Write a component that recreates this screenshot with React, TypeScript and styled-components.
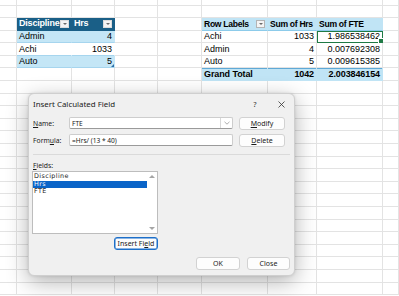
import React from "react";
import styled, { createGlobalStyle, css } from "styled-components";

const GlobalStyle = createGlobalStyle`
  html, body { margin: 0; padding: 0; background: #ffffff; }
  body { overflow: hidden; }
`;

type Tone = "grid" | "tableHead" | "band" | "tableRow" | "pivotHead" | "pivotRow" | "pivotTotal";

interface CellSpec {
	text?: string;
	tone?: Tone;
	align?: "left" | "right";
	filter?: boolean;
	selected?: boolean;
	handle?: boolean;
}

const COLUMNS = 9;
const ROWS = 24;

const cells: Record<string, CellSpec> = {
	"2-1": { text: "Discipline", tone: "tableHead", filter: true },
	"2-2": { text: "Hrs", tone: "tableHead", filter: true },
	"3-1": { text: "Admin", tone: "band" },
	"3-2": { text: "4", tone: "band", align: "right" },
	"4-1": { text: "Achi", tone: "tableRow" },
	"4-2": { text: "1033", tone: "tableRow", align: "right" },
	"5-1": { text: "Auto", tone: "band" },
	"5-2": { text: "5", tone: "band", align: "right", handle: true },

	"2-5": { text: "Row Labels", tone: "pivotHead", filter: true },
	"2-6": { text: "Sum of Hrs", tone: "pivotHead" },
	"2-7": { text: "Sum of FTE", tone: "pivotHead" },
	"3-5": { text: "Achi", tone: "pivotRow" },
	"3-6": { text: "1033", tone: "pivotRow", align: "right" },
	"3-7": { text: "1.986538462", tone: "pivotRow", align: "right", selected: true },
	"4-5": { text: "Admin", tone: "pivotRow" },
	"4-6": { text: "4", tone: "pivotRow", align: "right" },
	"4-7": { text: "0.007692308", tone: "pivotRow", align: "right" },
	"5-5": { text: "Auto", tone: "pivotRow" },
	"5-6": { text: "5", tone: "pivotRow", align: "right" },
	"5-7": { text: "0.009615385", tone: "pivotRow", align: "right" },
	"6-5": { text: "Grand Total", tone: "pivotTotal" },
	"6-6": { text: "1042", tone: "pivotTotal", align: "right" },
	"6-7": { text: "2.003846154", tone: "pivotTotal", align: "right" },
};

const toneStyles: Record<Tone, ReturnType<typeof css>> = {
	grid: css``,
	tableHead: css`
		background: #1a5f87;
		color: #ffffff;
		font-weight: bold;
		letter-spacing: -0.2px;
		border-right-color: #1a5f87;
		border-bottom-color: #1a5f87;
	`,
	band: css`
		background: #c4e6f6;
		border-right-color: #c4e6f6;
		border-bottom-color: #a6d5ee;
	`,
	tableRow: css`
		background: #ffffff;
		border-right-color: #ffffff;
		border-bottom-color: #a6d5ee;
	`,
	pivotHead: css`
		background: #c0e4f5;
		font-weight: bold;
		font-size: 8.6px;
		letter-spacing: -0.3px;
		border-right-color: #c0e4f5;
		border-bottom-color: #8ccbea;
	`,
	pivotRow: css``,
	pivotTotal: css`
		background: #c0e4f5;
		font-weight: bold;
		letter-spacing: -0.1px;
		border-right-color: #c0e4f5;
		border-bottom-color: #c0e4f5;
		box-shadow: inset 0 1px 0 #5fa9d6;
	`,
};

const Sheet = styled.div`
	position: relative;
	width: 399px;
	height: 296px;
	overflow: hidden;
	display: grid;
	grid-template-columns: 17px 55px 43px 43px 44px 66px 49px 66px 1fr;
	grid-template-rows: 5.5px repeat(23, 12.6px);
	font-family: "Liberation Sans", Arial, sans-serif;
	font-size: 9px;
	color: #000000;
	background: #ffffff;
`;

const Cell = styled.div<{ $tone: Tone; $align: "left" | "right"; $selected?: boolean }>`
	position: relative;
	box-sizing: border-box;
	display: flex;
	align-items: center;
	justify-content: ${(p) => (p.$align === "right" ? "flex-end" : "flex-start")};
	padding: 0 2px;
	white-space: nowrap;
	border-right: 1px solid #e3e3e3;
	border-bottom: 1px solid #e3e3e3;
	${(p) => toneStyles[p.$tone]}
	${(p) =>
		p.$selected &&
		css`
			outline: 1.5px solid #1f7a45;
			outline-offset: -1.5px;
			&::after {
				content: "";
				position: absolute;
				right: -2px;
				bottom: -2px;
				width: 4px;
				height: 4px;
				background: #1f7a45;
				border: 1px solid #ffffff;
			}
		`}
`;

const CellText = styled.span`
	line-height: 1;
`;

const FilterButton = styled.span<{ $dark?: boolean }>`
	margin-left: auto;
	flex: none;
	width: 9px;
	height: 8px;
	box-sizing: border-box;
	background: #f4f4f4;
	border: 1px solid ${(p) => (p.$dark ? "#dcdcdc" : "#b4b4b4")};
	display: flex;
	align-items: center;
	justify-content: center;
	&::after {
		content: "";
		border-left: 2px solid transparent;
		border-right: 2px solid transparent;
		border-top: 2.5px solid #6a6a6a;
	}
`;

const ResizeMark = styled.span`
	position: absolute;
	right: 0;
	bottom: 0;
	width: 0;
	height: 0;
	border-left: 3px solid transparent;
	border-bottom: 3px solid #2d6fa7;
`;

/* dialog */

const Dialog = styled.div`
	position: absolute;
	left: 28px;
	top: 93px;
	width: 267px;
	height: 183px;
	box-sizing: border-box;
	display: flex;
	flex-direction: column;
	background: #f0f0f0;
	border: 1px solid #cfcfcf;
	border-radius: 6px;
	box-shadow: 0 6px 22px rgba(0, 0, 0, 0.3), 0 0 3px rgba(0, 0, 0, 0.12);
	font-family: "Noto Sans", "Open Sans", sans-serif;
	font-size: 7px;
	color: #1a1a1a;
`;

const TitleBar = styled.div`
	height: 20px;
	display: flex;
	align-items: center;
	padding-left: 4px;
`;

const Title = styled.span`
	font-size: 7.9px;
	flex: 1;
`;

const CaptionButton = styled.span`
	width: 26px;
	height: 20px;
	display: flex;
	align-items: center;
	justify-content: center;
	color: #333333;
	font-size: 7.5px;
`;

const FormGrid = styled.div`
	margin-top: 2px;
	padding-left: 4px;
	display: grid;
	grid-template-columns: 30px 164px 46px;
	column-gap: 6px;
	row-gap: 3px;
	grid-template-rows: 14px 14px;
	align-items: center;
`;

const Label = styled.span`
	font-size: 6.8px;
	white-space: nowrap;
`;

const TextBox = styled.div`
	height: 12px;
	box-sizing: border-box;
	background: #ffffff;
	border: 1px solid #cdcdcd;
	border-bottom-color: #9a9a9a;
	border-radius: 2px;
	display: flex;
	align-items: center;
	padding-left: 2px;
	font-size: 6.6px;
	white-space: nowrap;
`;

const ComboArrow = styled.span`
	margin-left: auto;
	width: 11px;
	height: 10px;
	display: flex;
	align-items: center;
	justify-content: center;
	border-left: 1px solid #d8d8d8;
`;

const DlgButton = styled.button<{ $focused?: boolean; $width?: number }>`
	width: ${(p) => p.$width ?? 46}px;
	height: 13px;
	padding: 0;
	box-sizing: border-box;
	background: #fdfdfd;
	border: 1px solid ${(p) => (p.$focused ? "#1d6fc9" : "#d2d2d2")};
	box-shadow: ${(p) => (p.$focused ? "inset 0 0 0 0.5px #1d6fc9" : "none")};
	border-radius: 3px;
	font-family: "Noto Sans", "Open Sans", sans-serif;
	font-size: 7px;
	color: #1a1a1a;
	line-height: 1;
`;

const Separator = styled.div`
	margin: 7px 4px 0 4px;
	height: 1px;
	background: #dadada;
`;

const FieldsLabel = styled.span`
	margin: 6px 0 0 4px;
	height: 9px;
	font-size: 6.8px;
	line-height: 9px;
`;

const ListBox = styled.div`
	margin: 1px 0 0 3px;
	width: 126px;
	height: 63px;
	box-sizing: border-box;
	background: #ffffff;
	border: 1px solid #bdbdbd;
	display: flex;
`;

const ListItems = styled.div`
	flex: 1;
	padding-top: 1px;
	display: flex;
	flex-direction: column;
`;

const ListItem = styled.div<{ $selected?: boolean }>`
	height: 7.6px;
	line-height: 7.6px;
	padding-left: 1px;
	font-family: "DejaVu Sans", "Noto Sans", sans-serif;
	font-size: 6.4px;
	letter-spacing: 0.4px;
	overflow: hidden;
	background: ${(p) => (p.$selected ? "#0a64c8" : "transparent")};
	color: ${(p) => (p.$selected ? "#ffffff" : "#1a1a1a")};
`;

const ScrollTrack = styled.div`
	width: 10px;
	display: flex;
	flex-direction: column;
	align-items: center;
	justify-content: space-between;
	padding: 3px 0;
	box-sizing: border-box;
`;

const Arrow = styled.span<{ $down?: boolean }>`
	width: 0;
	height: 0;
	border-left: 3px solid transparent;
	border-right: 3px solid transparent;
	${(p) => (p.$down ? "border-top: 3px solid #a5a5a5;" : "border-bottom: 3px solid #a5a5a5;")}
`;

const InsertRow = styled.div`
	margin: 3px 0 0 3px;
	width: 126px;
	display: flex;
	justify-content: flex-end;
`;

const Footer = styled.div`
	margin-top: 7px;
	padding-right: 4px;
	display: flex;
	justify-content: flex-end;
	gap: 7px;
`;

const CloseGlyph = () => (
	<svg width="7" height="7" viewBox="0 0 7 7">
		<path d="M0.5 0.5 L6.5 6.5 M6.5 0.5 L0.5 6.5" stroke="#333" strokeWidth="0.8" />
	</svg>
);

const Chevron = () => (
	<svg width="6" height="4" viewBox="0 0 6 4">
		<path d="M0.5 0.8 L3 3.2 L5.5 0.8" stroke="#8a8a8a" strokeWidth="0.7" fill="none" />
	</svg>
);

const App: React.FC = () => {
	const grid: React.ReactNode[] = [];
	for (let r = 0; r < ROWS; r++) {
		for (let c = 0; c < COLUMNS; c++) {
			const spec = cells[`${r}-${c}`] ?? {};
			grid.push(
				<Cell
					key={`${r}-${c}`}
					$tone={spec.tone ?? "grid"}
					$align={spec.align ?? "left"}
					$selected={spec.selected}
				>
					{spec.text && <CellText>{spec.text}</CellText>}
					{spec.filter && <FilterButton $dark={spec.tone === "tableHead"} />}
					{spec.handle && <ResizeMark />}
				</Cell>
			);
		}
	}

	return (
		<>
			<GlobalStyle />
			<Sheet>
				{grid}
				<Dialog>
					<TitleBar>
						<Title>Insert Calculated Field</Title>
						<CaptionButton>?</CaptionButton>
						<CaptionButton>
							<CloseGlyph />
						</CaptionButton>
					</TitleBar>
					<FormGrid>
						<Label>
							<u>N</u>ame:
						</Label>
						<TextBox>
							FTE
							<ComboArrow>
								<Chevron />
							</ComboArrow>
						</TextBox>
						<DlgButton>
							<u>M</u>odify
						</DlgButton>
						<Label>
							Form<u>u</u>la:
						</Label>
						<TextBox>=Hrs/ (13 * 40)</TextBox>
						<DlgButton>
							<u>D</u>elete
						</DlgButton>
					</FormGrid>
					<Separator />
					<FieldsLabel>
						<u>F</u>ields:
					</FieldsLabel>
					<ListBox>
						<ListItems>
							<ListItem>Discipline</ListItem>
							<ListItem $selected>Hrs</ListItem>
							<ListItem>FTE</ListItem>
						</ListItems>
						<ScrollTrack>
							<Arrow />
							<Arrow $down />
						</ScrollTrack>
					</ListBox>
					<InsertRow>
						<DlgButton $focused $width={44}>
							Insert Fi<u>e</u>ld
						</DlgButton>
					</InsertRow>
					<Footer>
						<DlgButton $width={44}>OK</DlgButton>
						<DlgButton $width={43}>Close</DlgButton>
					</Footer>
				</Dialog>
			</Sheet>
		</>
	);
};

export default App;
